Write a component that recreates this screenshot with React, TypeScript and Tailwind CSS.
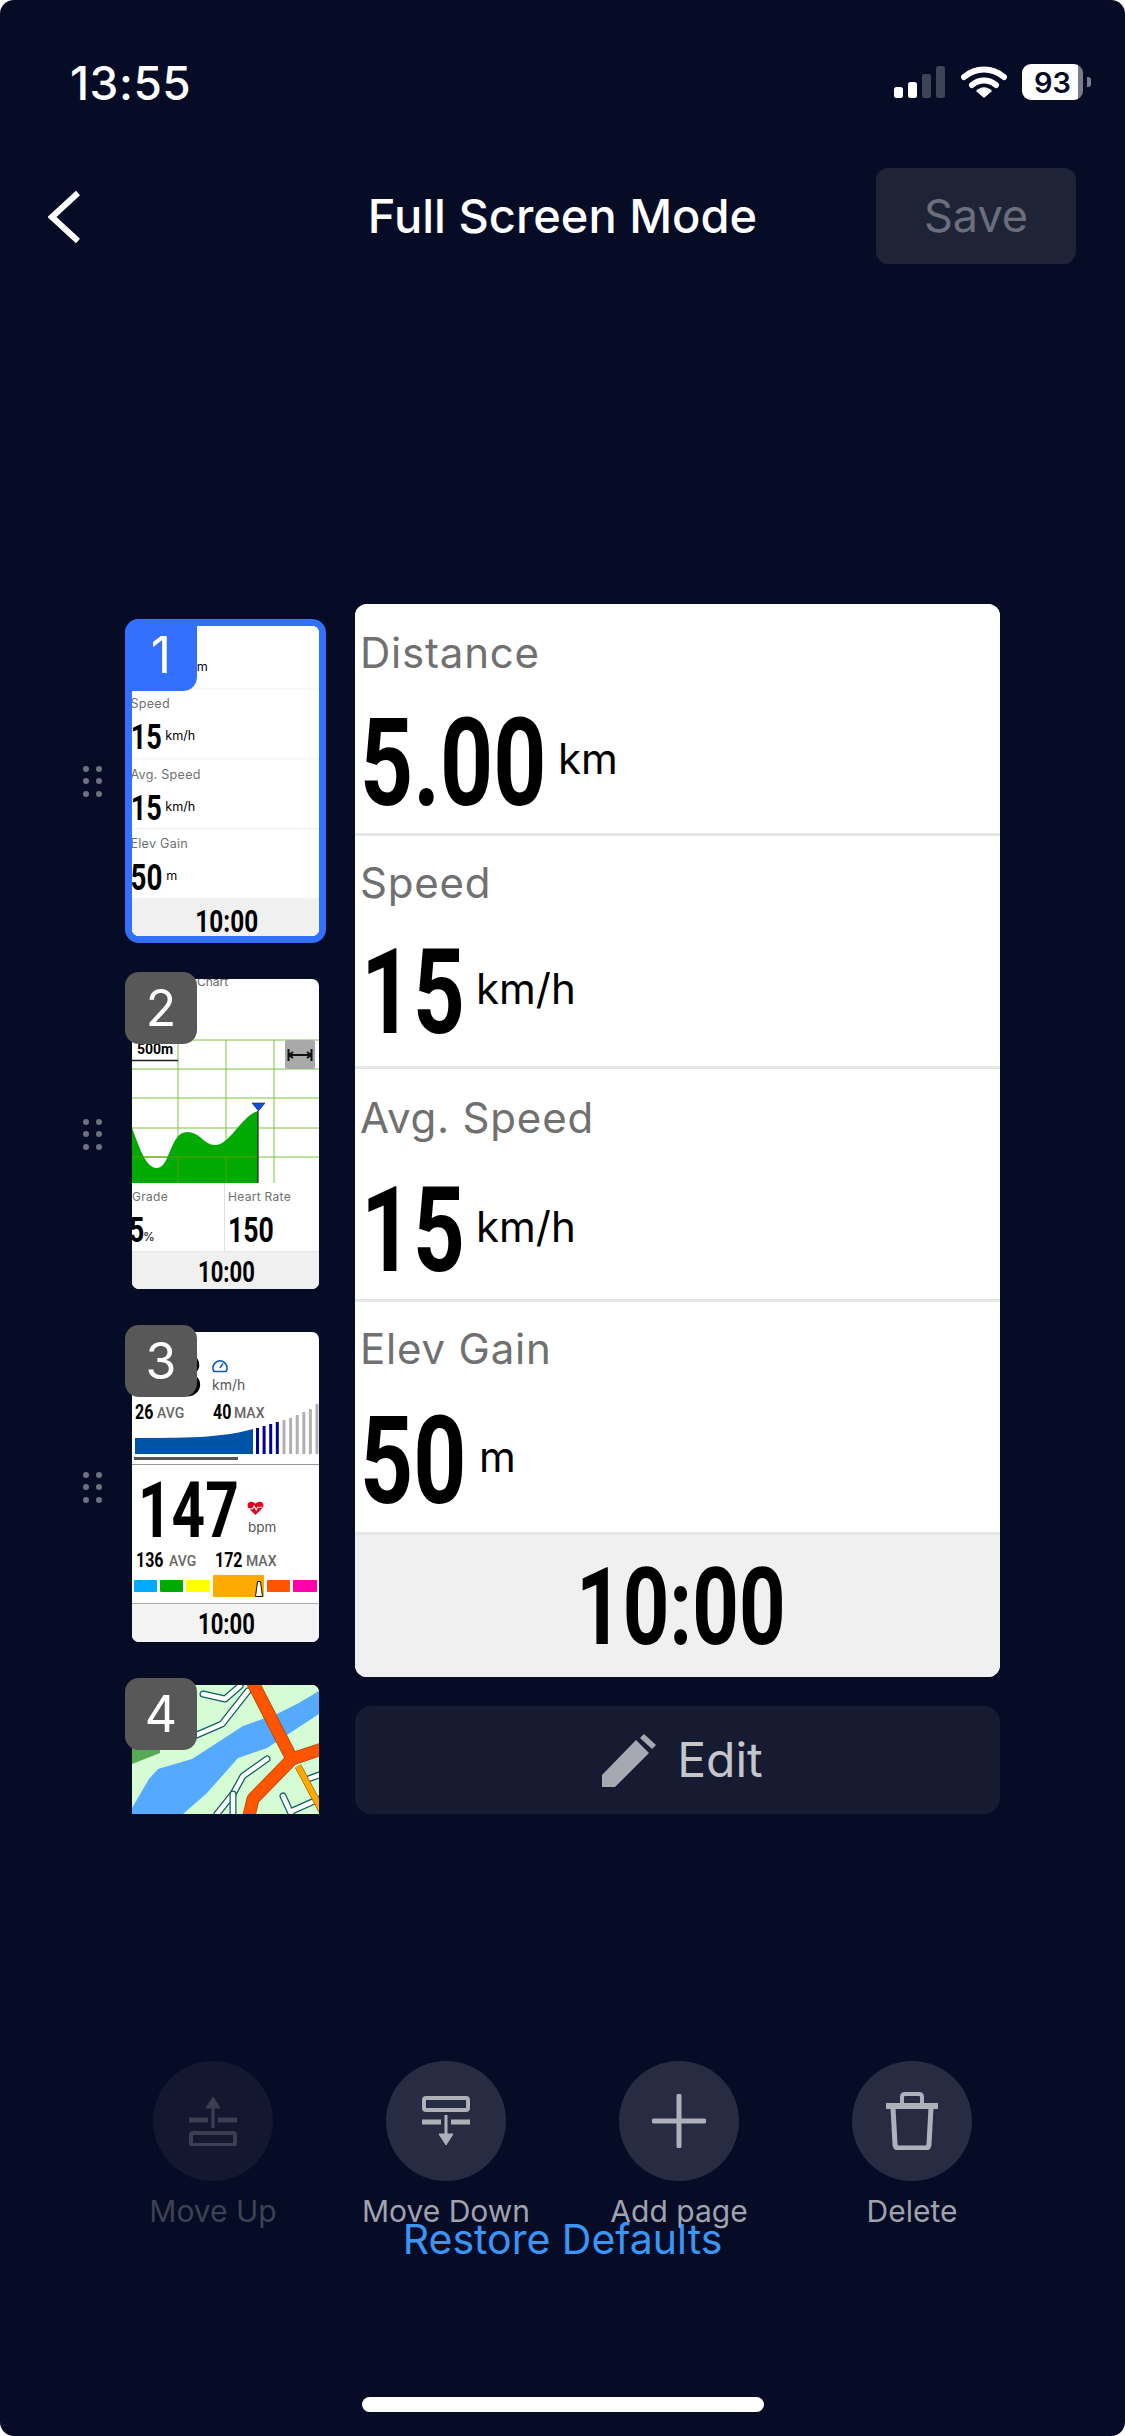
import { ReactNode } from 'react';

const SANS = "font-['Inter','Liberation_Sans',sans-serif]";

// condensed bold digits: Roboto squeezed sideways, width reserved up front
function Digits({ text, size, width, className = '' }: { text: string; size: string; width: string; className?: string }) {
  return (
    <span className={`inline-block shrink-0 ${width} ${className}`}>
      <span className={`inline-block origin-top-left scale-x-[0.76] whitespace-nowrap font-['Roboto',sans-serif] font-bold leading-none text-black ${size}`}>
        {text}
      </span>
    </span>
  );
}

type RowProps = {
  label: string;
  value: string;
  unit: string;
  size: string;
  numWidth: string;
  rowClass: string;
  labelClass: string;
  valueClass: string;
};

function DataRow({ label, value, unit, size, numWidth, rowClass, labelClass, valueClass }: RowProps) {
  return (
    <div className={`flex flex-col border-b-[3px] border-[#e6e6e6] bg-white pl-[5px] ${rowClass}`}>
      <div className={`text-[42px] leading-[60px] tracking-[0.8px] text-[#707070] ${labelClass}`}>{label}</div>
      <div className={`flex items-start ${valueClass}`}>
        <Digits text={value} size={size} width={numWidth} />
        <span className="mt-[31px] text-[42px] leading-[50px] text-black">{unit}</span>
      </div>
    </div>
  );
}

function DataPage() {
  return (
    <div className={`flex h-[1073px] w-[645px] flex-col overflow-hidden rounded-[12px] bg-white ${SANS}`}>
      <DataRow label="Distance" value="5.00" unit="km" size="text-[122px]" numWidth="w-[198px]" rowClass="h-[232px]" labelClass="mt-[19px]" valueClass="mt-[20px]" />
      <DataRow label="Speed" value="15" unit="km/h" size="text-[119px]" numWidth="w-[115px]" rowClass="h-[233px]" labelClass="mt-[17px]" valueClass="mt-[20px] pl-[1px]" />
      <DataRow label="Avg. Speed" value="15" unit="km/h" size="text-[119px]" numWidth="w-[115px]" rowClass="h-[233px]" labelClass="mt-[19px]" valueClass="mt-[23px] pl-[1px]" />
      <DataRow label="Elev Gain" value="50" unit="m" size="text-[122px]" numWidth="w-[119px]" rowClass="h-[233px]" labelClass="mt-[17px]" valueClass="mt-[22px]" />
      <div className="flex flex-1 items-center justify-center bg-[#f0f0f0] pt-[2px]">
        <Digits text="10:00" size="text-[107px]" width="w-[203px]" />
      </div>
    </div>
  );
}

function ThumbFooter({ bg = 'bg-[#f0f0f0]', h = 'h-[37px]' }: { bg?: string; h?: string }) {
  return (
    <div className={`flex ${h} items-center justify-center pt-[4px] ${bg}`}>
      <Digits text="10:00" size="text-[29px]" width="w-[55px]" />
    </div>
  );
}

function ChartThumb() {
  return (
    <div className={`flex h-[310px] w-[187px] flex-col bg-white ${SANS}`}>
      <div className="relative h-[204px]">
        <svg viewBox="0 0 187 204" className="h-[204px] w-[187px]">
          <path d="M0 61H187M0 90H187M0 119H187M0 149H187M0 178H187M46 61V204M94 61V204M142 61V204" fill="none" stroke="#7cc43c" strokeWidth="1" />
          <path d="M0 149C8 170 14 189 25 189C38 189 38 153 55 153C68 153 72 166 83 166C98 166 110 136 126 132V204H0Z" fill="#00aa00" />
          <path d="M0 178H126M46 178V204M94 178V204" stroke="#5aa000" strokeWidth="1" fill="none" />
          <path d="M126 132V204" stroke="#222" strokeWidth="1.200" />
          <path d="M120 124H133L126.500 132Z" fill="#0a50e0" stroke="#123" strokeWidth="0.600" />
          <path d="M0 81.500H46" stroke="#222" strokeWidth="1.500" />
          <rect x="153" y="61" width="30" height="29" rx="2" fill="#a9a9a9" />
          <path d="M156 76H180M156.500 70V82M179.500 70V82M161 73L157 76L161 79M175 73L179 76L175 79" stroke="#111" strokeWidth="2" fill="none" />
        </svg>
        <span className="absolute left-[65px] top-[-4px] text-[12px] leading-[14px] text-[#666]">Chart</span>
        <span className="absolute left-[5px] top-[62px] bg-white font-['Roboto',sans-serif] text-[14px] font-bold leading-[16px] text-black">500m</span>
      </div>
      <div className="flex h-[69px] border-b border-[#e6e6e6]">
        <div className="w-[93px] overflow-hidden border-r border-[#e0e0e0]">
          <div className="mt-[7px] text-[12px] leading-[14px] tracking-[0.3px] text-[#707070]">Grade</div>
          <div className="mt-[9px] flex items-end">
            <Digits text="5" size="text-[35px]" width="w-[14px]" className="-ml-[3px]" />
            <span className="mb-[4px] text-[12px] leading-[14px] text-black">%</span>
          </div>
        </div>
        <div className="flex-1 pl-[3px]">
          <div className="mt-[7px] whitespace-nowrap text-[12px] leading-[14px] tracking-[0.3px] text-[#707070]">Heart Rate</div>
          <div className="mt-[9px]">
            <Digits text="150" size="text-[35px]" width="w-[46px]" />
          </div>
        </div>
      </div>
      <ThumbFooter h="h-[37px]" />
    </div>
  );
}

function Stat({ value, tag, gap }: { value: string; tag: string; gap: string }) {
  return (
    <div className={`flex items-center ${gap}`}>
      <Digits text={value} size="text-[21px]" width={value.length === 2 ? 'w-[19px]' : 'w-[30px]'} />
      <span className="font-['Roboto',sans-serif] text-[14px] font-medium leading-[14px] text-[#666]">{tag}</span>
    </div>
  );
}

const dashTops = [96, 94, 92, 90];
const grayTops = [88, 86, 83, 80, 77, 72];
const zones = [
  { color: 'bg-[#00aaff]', w: 'w-[23px]' },
  { color: 'bg-[#00aa00]', w: 'w-[23px]' },
  { color: 'bg-[#ffff00]', w: 'w-[24px]' },
];

function ZonesThumb() {
  return (
    <div className={`flex h-[310px] w-[187px] flex-col bg-white ${SANS}`}>
      <div className="relative h-[133px] border-b border-[#999]">
        <div className="absolute right-[116px] top-[14px] font-['Roboto',sans-serif] text-[60px] font-bold leading-none text-black">8</div>
        <svg viewBox="0 0 16 14" className="absolute left-[80px] top-[27px] h-[14px] w-[16px]">
          <path d="M2 12.500A7 7 0 1 1 14 12.500Z" fill="none" stroke="#0a5bb5" strokeWidth="1.700" />
          <path d="M8 9L11 4.500" stroke="#0a5bb5" strokeWidth="1.500" />
        </svg>
        <span className="absolute left-[80px] top-[45px] text-[14px] leading-[16px] text-[#555]">km/h</span>
        <div className="absolute left-[3px] top-[69px]"><Stat value="26" tag="AVG" gap="gap-[3px]" /></div>
        <div className="absolute left-[81px] top-[69px]"><Stat value="40" tag="MAX" gap="gap-[2px]" /></div>
        <svg viewBox="0 0 187 133" className="absolute left-0 top-0 h-[133px] w-[187px]">
          <path d="M3 122V106C50 106 90 106 121 97V122Z" fill="#0054a8" />
          {dashTops.map((t, i) => (
            <rect key={t} x={124 + i * 6.6} y={t} width="3" height={122 - t} fill="#0000a0" />
          ))}
          {grayTops.map((t, i) => (
            <rect key={t} x={150.500 + i * 6.6} y={t} width="3" height={122 - t} fill="#b0b0b0" />
          ))}
          <rect x="2" y="125" width="104" height="3" fill="#555" />
        </svg>
      </div>
      <div className="relative h-[139px] border-b border-[#aaa]">
        <div className="absolute left-[6px] top-[8px]">
          <Digits text="147" size="text-[77px]" width="w-[103px]" />
        </div>
        <svg viewBox="0 0 24 20" className="absolute left-[115px] top-[36px] h-[14px] w-[17px]">
          <path d="M12 20L2 10C-1 6 1 1 6 1C9 1 11 3 12 4C13 3 15 1 18 1C23 1 25 6 22 10Z" fill="#e8001c" />
          <path d="M2 11H8L10 7L13 13L15 9H22" fill="none" stroke="#fff" strokeWidth="1.500" />
        </svg>
        <span className="absolute left-[116px] top-[54px] text-[13.500px] leading-[16px] text-[#555]">bpm</span>
        <div className="absolute left-[4px] top-[84px]"><Stat value="136" tag="AVG" gap="gap-[3px]" /></div>
        <div className="absolute left-[83px] top-[84px]"><Stat value="172" tag="MAX" gap="gap-[1px]" /></div>
        <div className="absolute left-[2px] top-[110px] flex h-[22px] w-[184px] items-center gap-[3px]">
          {zones.map((z) => (
            <div key={z.color} className={`h-[12px] rounded-[1px] ${z.w} ${z.color}`} />
          ))}
          <div className="relative h-[22px] w-[51px] rounded-[1px] bg-[#ffaa00]">
            <svg viewBox="0 0 8 16" className="absolute bottom-0 right-[1px] h-[16px] w-[8px]">
              <path d="M2.500 0.500H5.500L7.500 15.500H0.500Z" fill="#fff" stroke="#111" strokeWidth="1" />
            </svg>
          </div>
          <div className="h-[12px] w-[23px] rounded-[1px] bg-[#ff5500]" />
          <div className="h-[12px] w-[24px] rounded-[1px] bg-[#ff00aa]" />
        </div>
      </div>
      <ThumbFooter bg="bg-[#f3f3f3]" h="h-[38px]" />
    </div>
  );
}

function MapThumb() {
  const road = (d: string) => (
    <g fill="none" strokeLinecap="round" strokeLinejoin="round">
      <path d={d} stroke="#0b5f5f" strokeWidth="7" />
      <path d={d} stroke="#fff" strokeWidth="4.500" />
    </g>
  );
  return (
    <svg viewBox="0 0 187 310" className="h-[310px] w-[187px] bg-[#d6fcd6]">
      <path d="M0 60H28V68L0 79Z" fill="#55aa55" />
      <path d="M0 123L17 94L26 84L60 74L111 41L145 29L165 19L187 6V29L135 63L106 73L75 108L51 129V310H0Z" fill="#55aaff" />
      {road('M71 9L93 14L108 1')}
      {road('M60 52L90 39L116 6')}
      {road('M135 74L111 91L101 109L85 129')}
      {road('M101 109V135')}
      {road('M151 111L162 135M160 126L187 114')}
      {road('M176 94L190 89')}
      <g fill="none" strokeLinejoin="round">
        <path d="M166 81L190 126" stroke="#b06a00" strokeWidth="7" />
        <path d="M166 81L190 126" stroke="#ffaa00" strokeWidth="5.500" />
        <path d="M120 -4L160 74L121 114L116 135M160 74L190 64" stroke="#b04a00" strokeWidth="13" />
        <path d="M120 -4L160 74L121 114L116 135M160 74L190 64" stroke="#ff5500" strokeWidth="11.500" />
      </g>
    </svg>
  );
}

function Grip() {
  return (
    <div className="grid w-[19px] grid-cols-2 gap-x-[7px] gap-y-[6.500px]">
      {[0, 1, 2, 3, 4, 5].map((i) => (
        <span key={i} className="h-[6px] w-[6px] rounded-full bg-[#6f7180]" />
      ))}
    </div>
  );
}

function PageItem({ n, active, children }: { n: number; active?: boolean; children: ReactNode }) {
  return (
    <div className="flex h-[310px] shrink-0 items-center">
      <div className="ml-[83px] w-[42px]"><Grip /></div>
      <div className="relative ml-[7px] h-[310px] w-[187px]">
        {active && <div className="absolute -inset-x-[7px] -inset-y-[7px] rounded-[14px] bg-[#3370ff]" />}
        <div className="relative h-[310px] w-[187px] overflow-hidden rounded-[7px] bg-white">{children}</div>
        <div
          className={`absolute -left-[7px] -top-[7px] flex h-[72px] w-[72px] items-center justify-center text-[50px] text-white ${SANS} ${
            active ? 'rounded-tl-[14px] rounded-br-[14px] bg-[#3370ff]' : 'rounded-[14px] bg-[#585858]'
          }`}
        >
          {n}
        </div>
      </div>
    </div>
  );
}

function ActionButton({ label, dim, children }: { label: string; dim?: boolean; children: ReactNode }) {
  return (
    <div className="flex w-[233px] flex-col items-center">
      <div className={`flex h-[120px] w-[120px] items-center justify-center rounded-full ${dim ? 'bg-[#131830]' : 'bg-[#272c42]'}`}>
        {children}
      </div>
      <span className={`mt-[13px] whitespace-nowrap text-[30px] leading-[34px] ${dim ? 'text-[#3d4153]' : 'text-[#a0a2ad]'}`}>{label}</span>
    </div>
  );
}

export default function App() {
  return (
    <div className={`flex h-[2436px] w-[1125px] flex-col overflow-hidden rounded-[14px] bg-[#060c26] ${SANS}`}>
      {/* status bar */}
      <div className="flex h-[168px] shrink-0 items-start justify-between pl-[70px] pr-[42px] pt-[57px]">
        <span className="text-[46px] font-medium leading-[52px] tracking-[0.5px] text-white">13:55</span>
        <div className="mt-[7px] flex items-center">
          <svg viewBox="0 0 51 32" className="h-[32px] w-[51px]">
            <rect x="0" y="21" width="9" height="11" rx="2.500" fill="#fff" />
            <rect x="14" y="16" width="9" height="16" rx="2.500" fill="#fff" />
            <rect x="28" y="8" width="9" height="24" rx="2.500" fill="#3f4356" />
            <rect x="42" y="0" width="9" height="32" rx="2.500" fill="#3f4356" />
          </svg>
          <svg viewBox="0 0 46 32" className="ml-[16px] h-[32px] w-[46px]">
            <path d="M3 11C15 1 31 1 43 11M11 19C18 13 28 13 35 19" fill="none" stroke="#fff" strokeWidth="6" strokeLinecap="round" />
            <path d="M15 25C20 20 26 20 31 25L23 32Z" fill="#fff" />
          </svg>
          <div className="relative ml-[15px] flex h-[36px] w-[61px] items-center justify-center overflow-visible rounded-[9px] bg-[linear-gradient(90deg,#fff_92%,#7a7c8a_92%)]">
            <span className="text-[29px] font-semibold leading-none text-[#060c26]">93</span>
            <span className="absolute -right-[8px] top-[13px] h-[10px] w-[4px] rounded-r-[3px] bg-[#7a7c8a]" />
          </div>
        </div>
      </div>

      {/* nav bar */}
      <div className="relative flex h-[96px] shrink-0 items-center justify-center">
        <svg viewBox="0 0 32 54" className="absolute left-[48px] top-[22px] h-[54px] w-[32px]">
          <path d="M30 3L4 27L30 51" fill="none" stroke="#fff" strokeWidth="6" />
        </svg>
        <span className="text-[47px] font-medium leading-[56px] text-white">Full Screen Mode</span>
        <div className="absolute right-[49px] top-0 flex h-[96px] w-[200px] items-center justify-center rounded-[12px] bg-[#1f2336] text-[45px] text-[#6b6e7d]">
          Save
        </div>
      </div>

      {/* pages + preview */}
      <div className="mt-[340px] flex h-[1210px] shrink-0">
        <div className="flex h-[1210px] w-[355px] shrink-0 flex-col gap-[43px] overflow-hidden pt-[22px]">
          <PageItem n={1} active>
            <div className="origin-top-left -translate-x-[3px] -translate-y-[6px] scale-[0.3]"><DataPage /></div>
          </PageItem>
          <PageItem n={2}><ChartThumb /></PageItem>
          <PageItem n={3}><ZonesThumb /></PageItem>
          <PageItem n={4}><MapThumb /></PageItem>
        </div>
        <div className="flex w-[645px] flex-col">
          <DataPage />
          <div className="mt-[29px] flex h-[108px] items-center justify-center rounded-[16px] bg-[#161b31] pl-[10px]">
            <svg viewBox="0 0 54 53" className="h-[53px] w-[54px]">
              <path d="M0 41L34 6L47 19L13 53H0Z" fill="#a6a8b2" />
              <path d="M38 4L42 0L54 11L50 15Z" fill="#a6a8b2" />
            </svg>
            <span className="ml-[21px] text-[48px] leading-[56px] text-[#c4c6ce]">Edit</span>
          </div>
        </div>
      </div>

      {/* actions */}
      <div className="mt-[247px] flex shrink-0 pl-[96.500px]">
        <ActionButton label="Move Up" dim>
          <svg viewBox="0 0 48 50" className="h-[50px] w-[48px]" fill="none" stroke="#3b3f52">
            <path d="M24 32V8" strokeWidth="3" />
            <path d="M24 1L31 12H17Z" fill="#3b3f52" strokeWidth="1" />
            <path d="M0 24H19M29 24H48" strokeWidth="5" />
            <rect x="2" y="37" width="44" height="12" rx="2" strokeWidth="4" />
          </svg>
        </ActionButton>
        <ActionButton label="Move Down">
          <svg viewBox="0 0 48 50" className="h-[50px] w-[48px]" fill="none" stroke="#aeb0ba">
            <rect x="2" y="2" width="44" height="12" rx="2" strokeWidth="4" />
            <path d="M0 26H19M29 26H48" strokeWidth="5" />
            <path d="M24 19V42" strokeWidth="3" />
            <path d="M24 49L31 38H17Z" fill="#aeb0ba" strokeWidth="1" />
          </svg>
        </ActionButton>
        <ActionButton label="Add page">
          <svg viewBox="0 0 54 54" className="h-[54px] w-[54px]">
            <path d="M27 2V52M2 27H52" stroke="#aeb0ba" strokeWidth="5" strokeLinecap="round" fill="none" />
          </svg>
        </ActionButton>
        <ActionButton label="Delete">
          <svg viewBox="0 0 52 58" className="h-[58px] w-[52px]" fill="none" stroke="#aeb0ba">
            <path d="M0 14H52" strokeWidth="6" />
            <path d="M16 12V5Q16 2 19 2H33Q36 2 36 5V12" strokeWidth="4" />
            <path d="M7 16L9 52Q9 56 13 56H39Q43 56 43 52L45 16" strokeWidth="5" />
          </svg>
        </ActionButton>
      </div>

      <div className="-mt-[11px] text-center text-[41px] leading-[44px] text-[#3b95f5]">Restore Defaults</div>

      <div className="mt-[136px] flex justify-center">
        <div className="h-[15px] w-[402px] rounded-full bg-white" />
      </div>
    </div>
  );
}
